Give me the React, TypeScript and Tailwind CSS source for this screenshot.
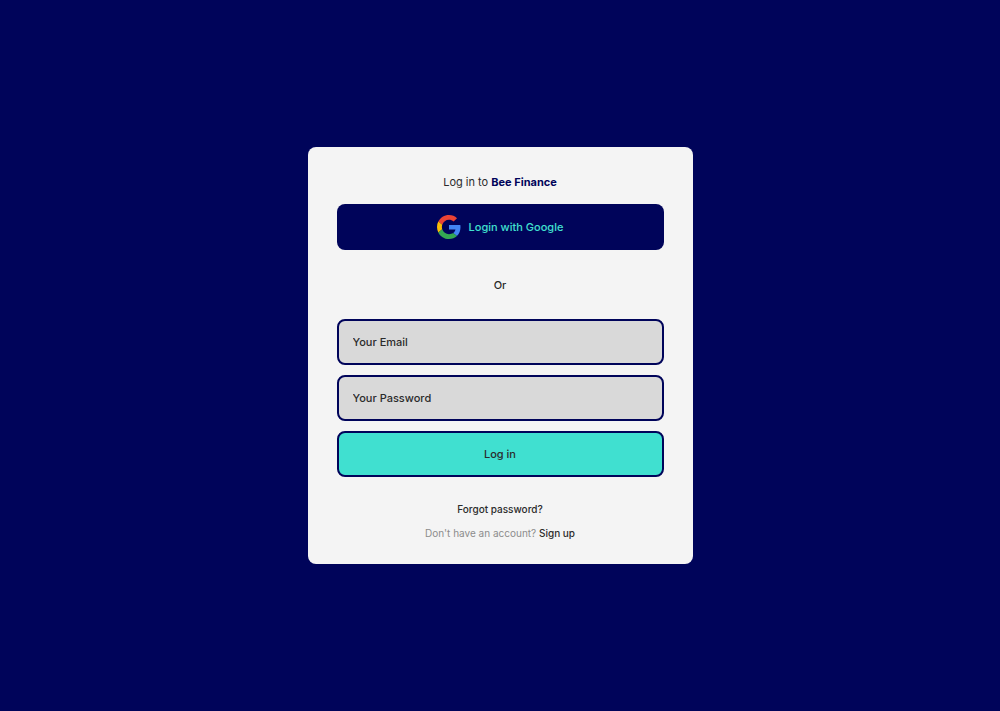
import { useState } from "react";
import type { FormEvent } from "react";

function GoogleLogo() {
  return (
    <svg viewBox="0 0 48 48" className="size-6" aria-hidden="true">
      <path fill="#ea4335" d="M24 9.5c3.54 0 6.71 1.22 9.21 3.6l6.85-6.85C35.9 2.38 30.47 0 24 0 14.62 0 6.51 5.38 2.56 13.22l7.98 6.19C12.43 13.72 17.74 9.5 24 9.5z" />
      <path fill="#4285f4" d="M46.98 24.55c0-1.57-.15-3.09-.38-4.55H24v9.02h12.94c-.58 2.96-2.26 5.48-4.78 7.18l7.73 6c4.51-4.18 7.09-10.36 7.09-17.65z" />
      <path fill="#fbbc05" d="M10.53 28.59c-.48-1.45-.76-2.99-.76-4.59s.27-3.14.76-4.59l-7.98-6.19C.92 16.46 0 20.12 0 24c0 3.88.92 7.54 2.56 10.78l7.97-6.19z" />
      <path fill="#34a853" d="M24 48c6.48 0 11.93-2.13 15.89-5.81l-7.73-6c-2.15 1.45-4.92 2.3-8.16 2.3-6.26 0-11.57-4.22-13.47-9.91l-7.98 6.19C6.51 42.62 14.62 48 24 48z" />
    </svg>
  );
}

type FieldProps = {
  id: string;
  type: string;
  label: string;
  value: string;
  onChange: (value: string) => void;
};

function Field({ id, type, label, value, onChange }: FieldProps) {
  return (
    <input
      id={id}
      type={type}
      value={value}
      aria-label={label}
      placeholder={label}
      onChange={(event) => onChange(event.target.value)}
      className="block h-[46px] w-full rounded-lg border-2 border-[#00045a] bg-[#d9d9d9] px-3.5 text-[11px] font-medium text-[#2b2b2b] placeholder:text-[#2b2b2b] placeholder:opacity-100"
    />
  );
}

export default function App() {
  const [email, setEmail] = useState("");
  const [password, setPassword] = useState("");

  const handleSubmit = (event: FormEvent) => event.preventDefault();

  return (
    <main className="flex min-h-screen items-center justify-center bg-[#00045a] font-['Inter',sans-serif] text-[#2b2b2b]">
      <section className="w-full max-w-[385px] rounded-lg bg-[#f4f4f4] px-[29px] pt-[25px] pb-[23px] text-center">
        <h1 className="text-[11px] leading-5">
          Log in to <strong className="font-bold text-[#00045a]">Bee Finance</strong>
        </h1>
        <button
          type="button"
          className="mt-3 flex h-[46px] w-full items-center justify-center gap-2 rounded-lg bg-[#00045a] text-[11px] font-medium text-[#40e0d0]"
        >
          <GoogleLogo />
          Login with Google
        </button>
        <p className="mt-[25px] text-[11px] leading-5 font-medium">Or</p>
        <form onSubmit={handleSubmit} className="mt-6 flex flex-col gap-2.5">
          <Field id="email" type="email" label="Your Email" value={email} onChange={setEmail} />
          <Field id="password" type="password" label="Your Password" value={password} onChange={setPassword} />
          <button
            type="submit"
            className="h-[46px] w-full rounded-lg border-2 border-[#00045a] bg-[#40e0d0] text-[11px] font-medium"
          >
            Log in
          </button>
        </form>
        <div className="mt-6 flex flex-col gap-2 text-[10px] leading-4">
          <a href="#forgot" className="self-center font-medium">
            Forgot password?
          </a>
          <p className="text-[#8c8c8c]">
            Don't have an account?{" "}
            <a href="#signup" className="font-medium text-[#2b2b2b]">
              Sign up
            </a>
          </p>
        </div>
      </section>
    </main>
  );
}
